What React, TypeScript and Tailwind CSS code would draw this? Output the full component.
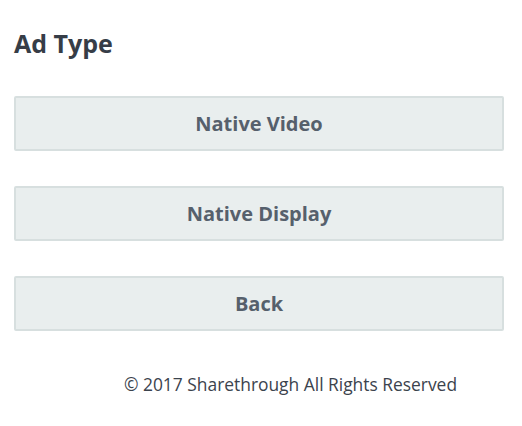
const buttons = ["Native Video", "Native Display", "Back"];

export default function App() {
    return (
        <div className="w-[522px] h-[426px] bg-white px-[14px] pt-[27px] font-['Open_Sans',sans-serif]">
            <h1 className="text-[25px] leading-[32px] font-bold text-[#363d47]">Ad Type</h1>
            <div className="mt-[37px] flex flex-col gap-[35px] w-[490px]">
                {buttons.map((label) => (
                    <button
                        key={label}
                        className="h-[55px] w-full rounded-[2px] border-2 border-[#d7dfdf] bg-[#e9eeee] text-[20px] font-bold text-[#56606c]"
                    >
                        {label}
                    </button>
                ))}
            </div>
            <p className="mt-[43px] pl-[110px] text-[17.4px] leading-[20px] text-[#3b434d]">
                © 2017 Sharethrough All Rights Reserved
            </p>
        </div>
    );
}
